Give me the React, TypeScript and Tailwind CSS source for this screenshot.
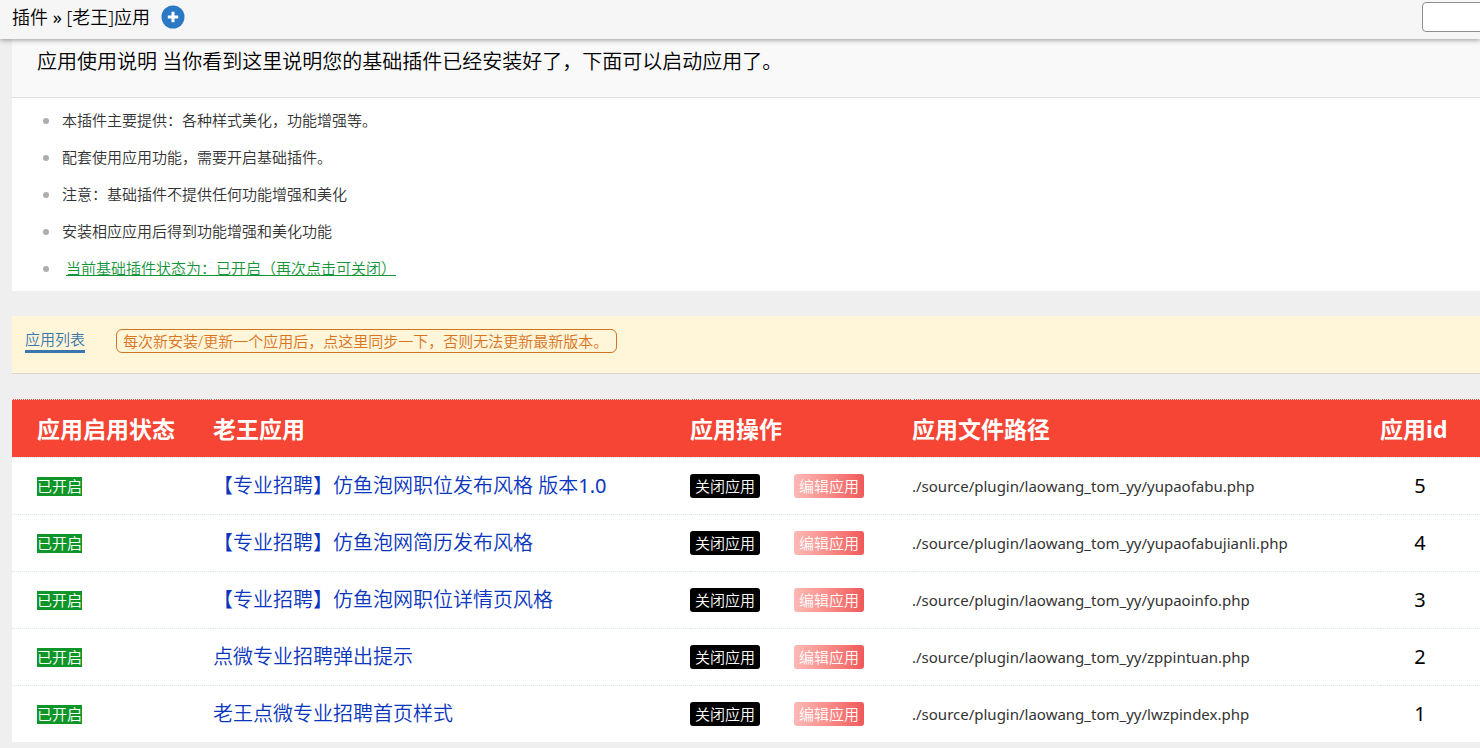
import React from "react";

const notes = [
  "本插件主要提供：各种样式美化，功能增强等。",
  "配套使用应用功能，需要开启基础插件。",
  "注意：基础插件不提供任何功能增强和美化",
  "安装相应应用后得到功能增强和美化功能",
];

const apps = [
  { id: 5, name: "【专业招聘】仿鱼泡网职位发布风格 版本", version: "1.0", file: "yupaofabu.php" },
  { id: 4, name: "【专业招聘】仿鱼泡网简历发布风格", file: "yupaofabujianli.php" },
  { id: 3, name: "【专业招聘】仿鱼泡网职位详情页风格", file: "yupaoinfo.php" },
  { id: 2, name: "点微专业招聘弹出提示", file: "zppintuan.php" },
  { id: 1, name: "老王点微专业招聘首页样式", file: "lwzpindex.php" },
];

const headCell = "border-t border-dotted border-[#deefee] p-0 font-bold";
const bodyCell = "border-t border-dotted border-[#d7e3ea] p-0";

function TopBar() {
  return (
    <header className="relative z-10 flex h-[39px] items-start justify-between bg-[#f6f6f6] pl-3 shadow-[0_1px_5px_rgba(0,0,0,0.4)]">
      <nav className="flex items-center gap-[11px] pt-1 text-[18px] leading-[26px] text-black">
        <span>
          插件 <span className="font-normal">»</span> [老王]应用
        </span>
        <button type="button" aria-label="添加" className="flex">
          <svg width="24" height="24" viewBox="0 0 24 24" aria-hidden="true">
            <circle cx="12" cy="12" r="11.5" fill="#2b79c5" />
            <path d="M12 6.8v10.4M6.8 12h10.4" stroke="#fff" strokeWidth="3" />
          </svg>
        </button>
      </nav>
      <div className="w-[58px] overflow-hidden pt-[2px]">
        <input
          type="text"
          aria-label="搜索"
          className="block h-[30px] w-40 rounded-[4px] border border-[#8f8f8f] bg-white px-2 text-[15px]"
        />
      </div>
    </header>
  );
}

function Instructions() {
  return (
    <section className="bg-white">
      <h1 className="border-b border-[#dedede] bg-[#f9f9f9] pt-2 pb-[20px] pl-[25px] text-[20px] leading-[30px] text-black">
        应用使用说明 当你看到这里说明您的基础插件已经安装好了，下面可以启动应用了。
      </h1>
      <ul className="py-1 pl-[31px] text-[15px] leading-[37px] text-[#333]">
        {notes.map((note) => (
          <li key={note} className="flex items-center gap-[13px]">
            <span className="size-[6px] rounded-full bg-[#adadad]" />
            {note}
          </li>
        ))}
        <li className="flex items-center gap-[17px]">
          <span className="size-[6px] rounded-full bg-[#adadad]" />
          <a href="#status" className="text-[#15953a] underline">
            当前基础插件状态为：已开启（再次点击可关闭）
          </a>
        </li>
      </ul>
    </section>
  );
}

function SyncBar() {
  return (
    <section className="flex items-start gap-[31px] border-b border-[#ddd8cd] bg-[#fff5d8] px-[13px] pt-[13px] pb-5 text-[15px]">
      <a href="#list" className="border-b-[3px] border-[#3a76ae] leading-[21px] text-[#3a76ae]">
        应用列表
      </a>
      <button
        type="button"
        className="h-6 w-[501px] rounded-[6px] border border-[#cf7420] px-[6px] text-left leading-[20px] whitespace-nowrap text-[#d9731c]"
      >
        每次新安装/更新一个应用后，点这里同步一下，否则无法更新最新版本。
      </button>
    </section>
  );
}

function AppTable() {
  return (
    <table className="w-full table-fixed border-separate border-spacing-0 bg-white text-left">
      <colgroup>
        <col className="w-[201px]" />
        <col />
        <col className="w-[222px]" />
        <col className="w-[468px]" />
        <col className="w-[100px]" />
      </colgroup>
      <thead>
        <tr className="h-[58px] bg-[#f64435] text-[23px] leading-[34px] text-white">
          <th className={headCell}>
            <span className="pl-[25px]">应用启用状态</span>
          </th>
          <th className={headCell}>老王应用</th>
          <th className={headCell}>应用操作</th>
          <th className={headCell}>应用文件路径</th>
          <th className={headCell}>应用id</th>
        </tr>
      </thead>
      <tbody>
        {apps.map((app) => (
          <tr key={app.id} className="h-[57px]">
            <td className={bodyCell}>
              <span className="ml-[25px] block w-fit bg-[#109628] text-[15px] leading-[19px] text-white">已开启</span>
            </td>
            <td className={bodyCell}>
              <a href={`#app-${app.id}`} className="block text-[20px] leading-[30px] whitespace-nowrap text-[#0a36bd]">
                {app.name}
                {app.version && <span className="font-normal">{app.version}</span>}
              </a>
            </td>
            <td className={bodyCell}>
              <div className="flex gap-[34px] text-[15px] leading-6 text-white">
                <button type="button" className="rounded-[3px] bg-black px-[5px]">
                  关闭应用
                </button>
                <button
                  type="button"
                  className="rounded-[3px] bg-linear-to-r from-[#fcb9b6] to-[#f0585a] px-[5px]"
                >
                  编辑应用
                </button>
              </div>
            </td>
            <td className={bodyCell}>
              <span className="block text-[15px] leading-[22px] font-normal whitespace-nowrap text-[#333]">
                ./source/plugin/laowang_tom_yy/{app.file}
              </span>
            </td>
            <td className={bodyCell}>
              <span className="block w-20 text-center text-[20px] leading-[30px] font-normal text-black">{app.id}</span>
            </td>
          </tr>
        ))}
      </tbody>
    </table>
  );
}

export default function App() {
  return (
    <div
      lang="zh-CN"
      className="min-h-screen bg-[#efefef] font-['Noto_Sans','Noto_Sans_CJK_SC',sans-serif] font-[350]"
    >
      <TopBar />
      <main className="flex flex-col gap-[25px] pl-3">
        <Instructions />
        <SyncBar />
        <AppTable />
      </main>
    </div>
  );
}
